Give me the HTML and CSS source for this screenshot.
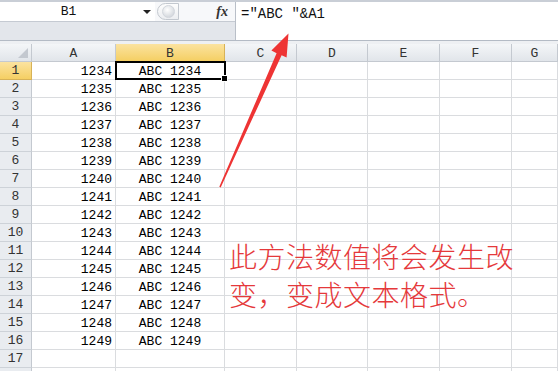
FILE: index.html
```html
<!DOCTYPE html>
<html lang="zh">
  <head>
    <meta charset="UTF-8" />
    <meta name="viewport" content="width=device-width, initial-scale=1.0" />
    <title>Excel 公式</title>
    <link rel="stylesheet" href="styles.css">
  </head>
  <body>
    <!-- 编辑栏 -->
    <div class="toolbar">
      <div class="name-col">
        <div class="name-row">
          <div class="name-box">
            <span class="name-text">B1</span>
            <span class="caret"></span>
          </div>
          <div class="splitter"><span class="knob"></span></div>
          <div class="fx">fx</div>
        </div>
        <div class="band"></div>
      </div>
      <div class="formula">=″ABC ″&amp;A1</div>
    </div>
    <div class="strip"></div>

    <!-- 表格 -->
    <div class="sheet" id="sheet"></div>

    <div class="note">此方法数值将会发生改<br />变，变成文本格式。</div>

    <svg class="arrow" width="558" height="371" viewBox="0 0 558 371">
      <polygon
        points="219.3,186.8 276.6,53.2 271.4,50.4 288.5,33.5 286.6,57.6 281.6,55.3 220.7,187.4"
        fill="#ee3434"
      />
    </svg>

    <script>
      const cols = ['A', 'B', 'C', 'D', 'E', 'F', 'G'];
      const sheetElement = document.getElementById('sheet');

      const corner = document.createElement('div');
      corner.classList.add('head', 'corner');
      sheetElement.appendChild(corner);

      cols.forEach((col) => {
        const cell = document.createElement('div');
        cell.classList.add('head', 'col-head');
        if (col === 'B') cell.classList.add('selected');
        cell.textContent = col;
        sheetElement.appendChild(cell);
      });

      // 18번째 행은 아래에서 잘리므로 번호 없이
      for (let r = 1; r <= 18; r++) {
        const rowHead = document.createElement('div');
        rowHead.classList.add('head', 'row-head');
        if (r === 1) rowHead.classList.add('selected');
        rowHead.textContent = r <= 17 ? r : '';
        sheetElement.appendChild(rowHead);

        const value = r <= 16 ? String(1233 + r) : '';

        cols.forEach((col) => {
          const cell = document.createElement('div');
          cell.classList.add('cell');
          if (col === 'A') {
            cell.classList.add('num');
            cell.textContent = value;
          }
          if (col === 'B') {
            cell.classList.add('text');
            cell.textContent = value ? 'ABC ' + value : '';
            if (r === 1) cell.classList.add('active');
          }
          sheetElement.appendChild(cell);
        });
      }
    </script>
  </body>
</html>
```

FILE: styles.css
```css
body {
  margin: 0;
  padding: 0;
  width: 558px;
  height: 371px;
  overflow: hidden;
  position: relative;
  background-color: #fff;
  font-family: "Liberation Mono", monospace;
  font-size: 13px;
}

/* 编辑栏 */
.toolbar {
  display: flex;
  height: 40px;
  box-sizing: border-box;
  border-top: 2px solid #c9ced6;
  background-color: #e3e6eb;
}

.name-col {
  width: 235px;
  display: flex;
  flex-direction: column;
}

.name-row {
  display: flex;
  align-items: center;
  height: 19px;
  background-color: #f7f8fa;
  border-bottom: 1px solid #c5cad2;
}

.name-box {
  width: 155px;
  height: 100%;
  display: flex;
  align-items: center;
  background-color: #fff;
  color: #111;
}

.name-text {
  flex: 1;
  text-align: center;
  padding-right: 6px;
}

.caret {
  width: 0;
  height: 0;
  margin-right: 4px;
  border-left: 4px solid transparent;
  border-right: 4px solid transparent;
  border-top: 4px solid #222;
}

.splitter {
  width: 22px;
  height: 17px;
  margin-left: 2px;
  display: flex;
  align-items: center;
  justify-content: center;
  border: 1px solid #c3c8cf;
  border-radius: 9px 0 0 9px;
  background: linear-gradient(#fdfdfd, #eceef1);
  box-sizing: border-box;
}

.knob {
  width: 11px;
  height: 11px;
  border-radius: 50%;
  background: radial-gradient(circle at 40% 35%, #fff, #c7ccd3);
  border: 1px solid #d2d6dc;
}

.fx {
  margin-left: auto;
  margin-right: 7px;
  font-family: "Liberation Serif", serif;
  font-style: italic;
  font-weight: bold;
  font-size: 14px;
  color: #333;
}

.band {
  flex: 1;
  background-color: #e3e6eb;
}

.formula {
  flex: 1;
  background-color: #fff;
  border-left: 1px solid #b9bfc8;
  padding: 4px 0 0 5px;
  font-size: 14px;
  color: #111;
}

.strip {
  height: 4px;
  box-sizing: border-box;
  border-top: 1px solid #b4bbc5;
  background-color: #eef0f3;
}

/* 表格 */
.sheet {
  display: grid;
  grid-template-columns: 32px 84px 109px 72px 71px 72px 72px 1fr;
  grid-template-rows: 18px;
  grid-auto-rows: 18px;
}

.head {
  box-sizing: border-box;
  display: flex;
  align-items: center;
  justify-content: center;
  color: #333;
  background: linear-gradient(#f4f6f8, #e1e5ea);
  border-right: 1px solid #c4c9d0;
  border-bottom: 1px solid #c4c9d0;
}

.col-head {
  padding-top: 2px;
}

.row-head {
  background: #e9ecf0;
  border-bottom-color: #cdd2d8;
}

.head.selected {
  background: linear-gradient(#fbe3a0, #f5cf63);
  border-right-color: #d7b257;
  border-bottom-color: #d7b257;
}

.corner {
  position: relative;
}

.corner::after {
  content: "";
  position: absolute;
  right: 3px;
  bottom: 3px;
  width: 0;
  height: 0;
  border-left: 10px solid transparent;
  border-bottom: 10px solid #c3c8cf;
}

.cell {
  box-sizing: border-box;
  display: flex;
  align-items: center;
  padding-top: 1px;
  border-right: 1px solid #dadcdf;
  border-bottom: 1px solid #dadcdf;
  color: #000;
}

.num {
  justify-content: flex-end;
  padding-right: 3px;
}

.text {
  justify-content: center;
}

.active {
  position: relative;
}

.active::before {
  content: "";
  position: absolute;
  left: -1px;
  top: -1px;
  right: -2px;
  bottom: -1px;
  border: 2px solid #000;
}

.active::after {
  content: "";
  position: absolute;
  right: -4px;
  bottom: -3px;
  width: 5px;
  height: 5px;
  background-color: #000;
  border: 1px solid #fff;
}

/* 红色说明文字 */
.note {
  position: absolute;
  left: 229px;
  top: 237px;
  font-family: "Noto Sans CJK SC", sans-serif;
  font-weight: 300;
  font-size: 28px;
  letter-spacing: 0.5px;
  line-height: 38px;
  color: #e5393b;
}

.arrow {
  position: absolute;
  left: 0;
  top: 0;
}
```
